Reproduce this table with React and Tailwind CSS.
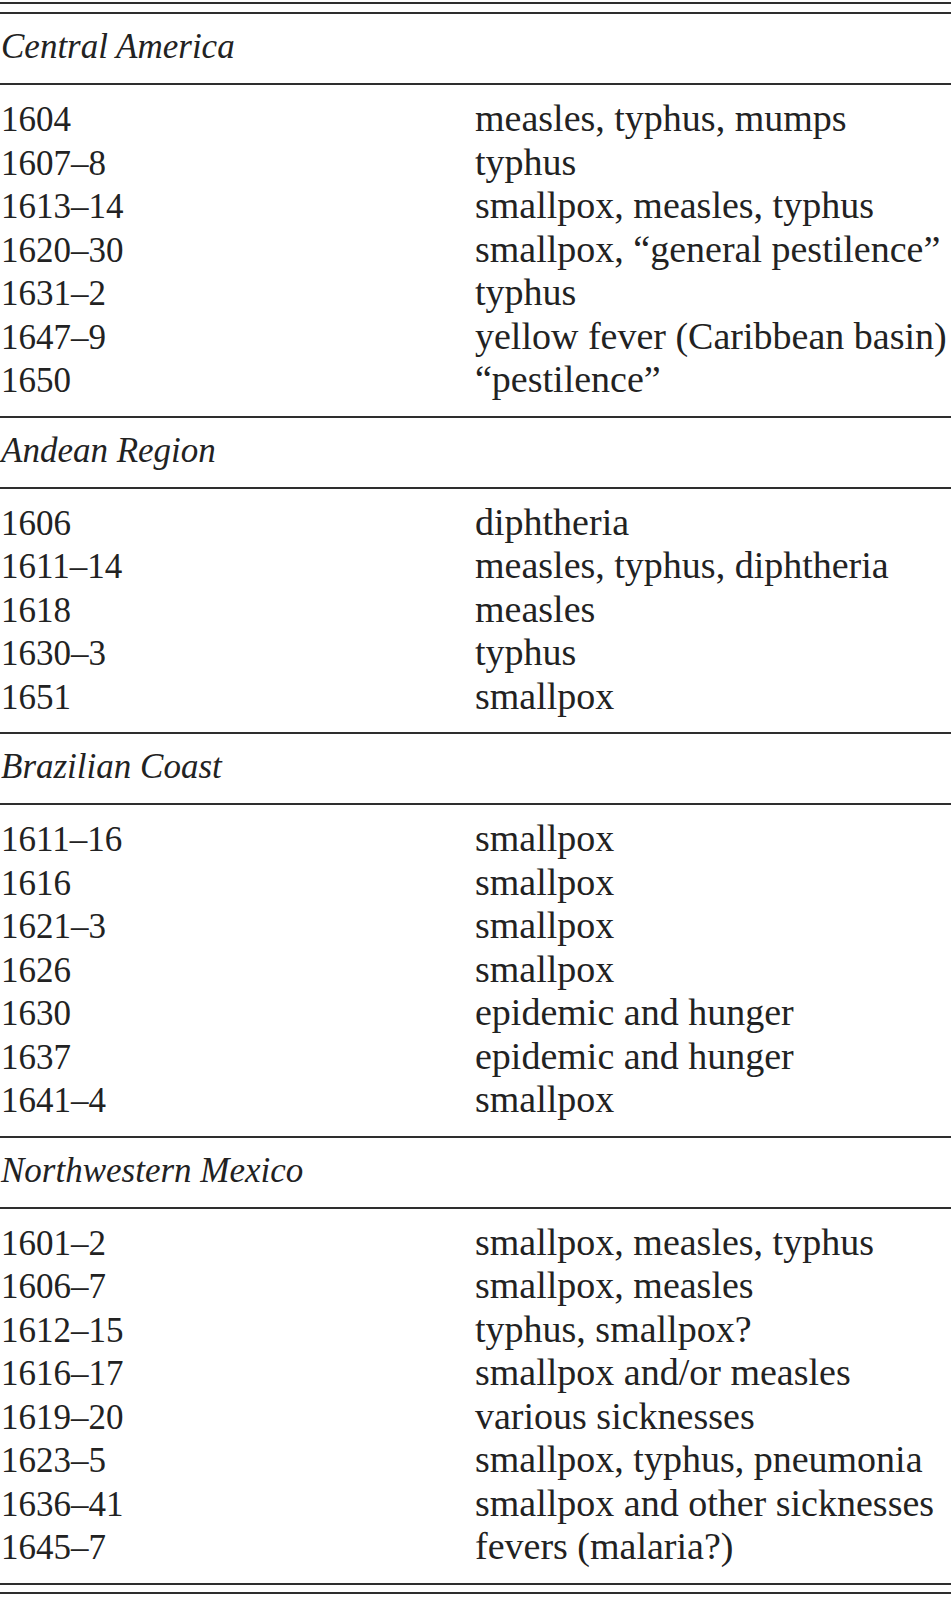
import React from "react";

const sections = [
  {
    title: "Central America",
    rows: [
      ["1604", "measles, typhus, mumps"],
      ["1607–8", "typhus"],
      ["1613–14", "smallpox, measles, typhus"],
      ["1620–30", "smallpox, “general pestilence”"],
      ["1631–2", "typhus"],
      ["1647–9", "yellow fever (Caribbean basin)"],
      ["1650", "“pestilence”"],
    ],
  },
  {
    title: "Andean Region",
    rows: [
      ["1606", "diphtheria"],
      ["1611–14", "measles, typhus, diphtheria"],
      ["1618", "measles"],
      ["1630–3", "typhus"],
      ["1651", "smallpox"],
    ],
  },
  {
    title: "Brazilian Coast",
    rows: [
      ["1611–16", "smallpox"],
      ["1616", "smallpox"],
      ["1621–3", "smallpox"],
      ["1626", "smallpox"],
      ["1630", "epidemic and hunger"],
      ["1637", "epidemic and hunger"],
      ["1641–4", "smallpox"],
    ],
  },
  {
    title: "Northwestern Mexico",
    rows: [
      ["1601–2", "smallpox, measles, typhus"],
      ["1606–7", "smallpox, measles"],
      ["1612–15", "typhus, smallpox?"],
      ["1616–17", "smallpox and/or measles"],
      ["1619–20", "various sicknesses"],
      ["1623–5", "smallpox, typhus, pneumonia"],
      ["1636–41", "smallpox and other sicknesses"],
      ["1645–7", "fevers (malaria?)"],
    ],
  },
];

function Rule() {
  return <div className="h-[2px] bg-[#2e2e2e]" />;
}

export default function App() {
  return (
    <div
      className="w-[951px] bg-white text-[#222222] pt-[2px] pb-[2px]"
      style={{ fontFamily: '"Liberation Serif", "Times New Roman", serif' }}
    >
      <Rule />
      <div className="h-[8px]" />
      <Rule />
      {sections.map((s, i) => (
        <div key={s.title}>
          {i > 0 && <Rule />}
          <div className="pl-[1px] pt-[12px] pb-[15px] text-[35px] leading-[42px] italic">
            {s.title}
          </div>
          <Rule />
          <div className="pt-[12px] pb-[14px]">
            {s.rows.map(([y, d]) => (
              <div key={y + d} className="flex h-[43.5px] leading-[43.5px]">
                <div className="w-[475px] shrink-0 pl-[1px] pt-[1px] text-[35px]">{y}</div>
                <div className="whitespace-nowrap text-[38px]">{d}</div>
              </div>
            ))}
          </div>
        </div>
      ))}
      <Rule />
      <div className="h-[7px]" />
      <Rule />
    </div>
  );
}
